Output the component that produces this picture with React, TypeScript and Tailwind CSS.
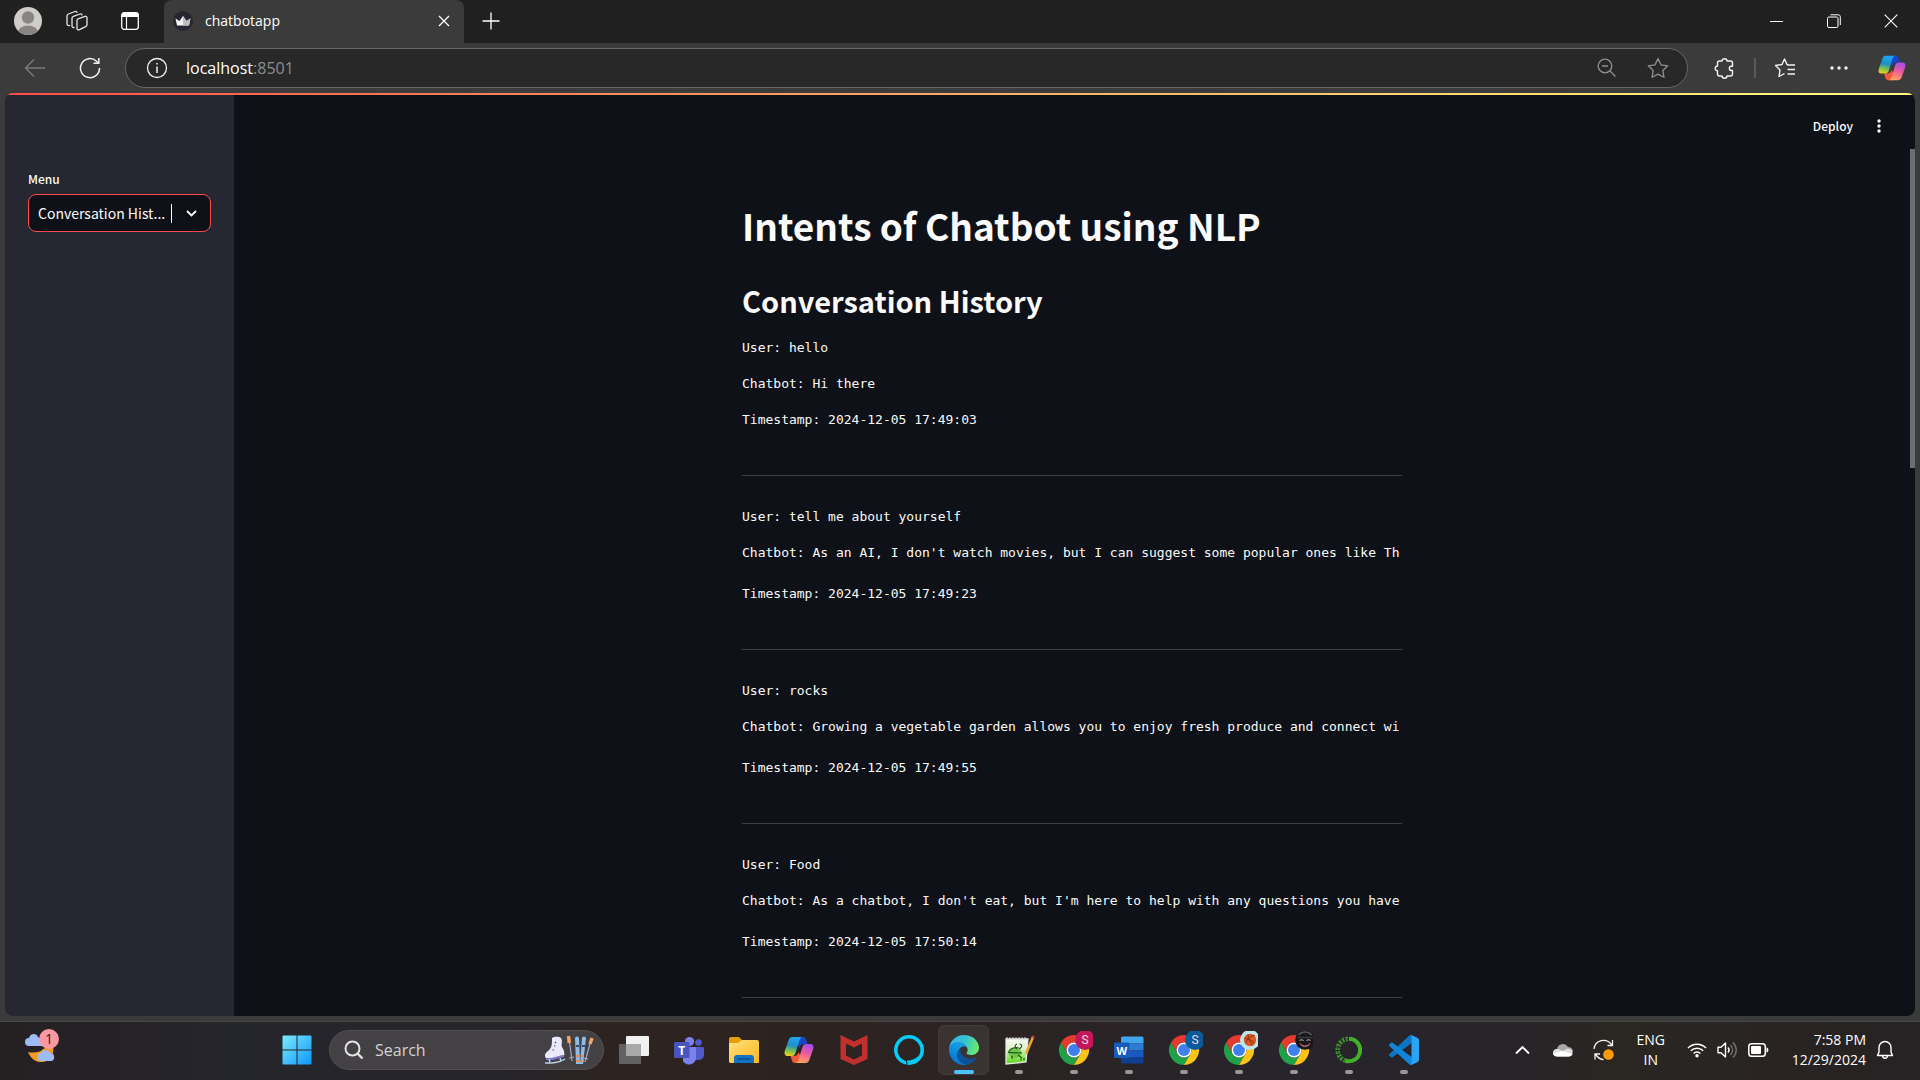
import React from 'react';

const SANS = "font-['Noto_Sans_CJK_SC',sans-serif]";

function Chrome({ children }: { children?: React.ReactNode }) {
  return (
    <svg width="38" height="38" viewBox="-4 -4 38 38" fill="none">
      <g transform="scale(0.625)">
        <path fill="#e33b2e" d="M24 12H44.8A24 24 0 0 0 3.2 12L13.6 30A12 12 0 0 1 24 12z" />
        <path fill="#21a04a" d="M34.4 30L24 48A24 24 0 0 1 3.2 12L13.6 30A12 12 0 0 0 34.4 30z" />
        <path fill="#fcc417" d="M24 12H44.8A24 24 0 0 1 24 48L34.4 30A12 12 0 0 0 24 12z" />
        <circle cx="24" cy="24" r="12" fill="#fff" />
        <circle cx="24" cy="24" r="9.6" fill="#3f7fee" />
      </g>
      {children}
    </svg>
  );
}

function Badge({ color }: { color: string }) {
  return (
    <g>
      <circle cx="26" cy="5" r="10" fill={color} />
      <text x="26" y="9" fill="#f3d6e4" fontSize="12" textAnchor="middle" fontFamily="Roboto, sans-serif">S</text>
    </g>
  );
}

function Copilot({ size, id }: { size: number; id: string }) {
  return (
    <svg width={size} height={size} viewBox="0 0 30 30" fill="none">
      <defs>
        <linearGradient id={id + 'a'} x1="9" y1="2" x2="5" y2="21" gradientUnits="userSpaceOnUse">
          <stop stopColor="#1fa5f0" />
          <stop offset=".45" stopColor="#1f8fc8" />
          <stop offset=".72" stopColor="#7cc04c" />
          <stop offset="1" stopColor="#f5cf1d" />
        </linearGradient>
        <linearGradient id={id + 'b'} x1="25" y1="9" x2="18" y2="28" gradientUnits="userSpaceOnUse">
          <stop stopColor="#a44cf0" />
          <stop offset=".5" stopColor="#ee5a9c" />
          <stop offset="1" stopColor="#fca45c" />
        </linearGradient>
      </defs>
      <path d="M14 2H19C21.500 2 22 4 22.800 7L23.500 9H20C17 9 16 11 15.500 13L13 8z" fill="#1745c8" />
      <path d="M16 28H11C8.500 28 8 26 7.200 23L6.500 21H10C13 21 14 19 14.500 17L17 22z" fill="#f4583c" />
      <path d="M8.500 2H18.500C16.800 2 16 4 15.300 6L11.500 18C11 20 9.500 21 8 21H4C1 21 0 19 .8 16L4.500 5.500C5.200 3 6.500 2 8.500 2z" fill={`url(#${id}a)`} />
      <path d="M21.500 28H11.500C13.200 28 14 26 14.700 24L18.500 12C19 10 20.500 9 22 9H26C29 9 30 11 29.200 14L25.500 24.500C24.800 27 23.500 28 21.500 28z" fill={`url(#${id}b)`} />
    </svg>
  );
}

function EdgeLogo() {
  return (
    <svg width="30" height="30" viewBox="0 0 256 256">
      <defs>
        <linearGradient id="eg1" x1="63" y1="178" x2="242" y2="178" gradientUnits="userSpaceOnUse">
          <stop stopColor="#0c59a4" /><stop offset="1" stopColor="#114a8b" />
        </linearGradient>
        <linearGradient id="eg2" x1="150" y1="90" x2="40" y2="235" gradientUnits="userSpaceOnUse">
          <stop stopColor="#1b9de2" /><stop offset=".4" stopColor="#1595df" /><stop offset="1" stopColor="#0078d4" />
        </linearGradient>
        <linearGradient id="eg3" x1="20" y1="50" x2="240" y2="130" gradientUnits="userSpaceOnUse">
          <stop stopColor="#35b4ee" /><stop offset=".5" stopColor="#36c3d0" /><stop offset="1" stopColor="#66eb6e" />
        </linearGradient>
      </defs>
      <g transform="translate(-4.6 -4.9)">
        <path fill="url(#eg1)" d="M235.680 195.460a93.730 93.730 0 01-10.540 4.710 101.870 101.870 0 01-35.900 6.460c-47.320 0-88.540-32.550-88.540-74.320A31.480 31.480 0 01117.130 105c-42.800 1.800-53.800 46.400-53.800 72.530 0 73.880 68.090 81.370 82.760 81.370 7.910 0 19.840-2.300 27-4.560l1.310-.44a128.340 128.340 0 0066.600-52.800 4 4 0 00-5.320-5.640z" />
        <path fill="url(#eg2)" d="M110.340 246.340A79.200 79.200 0 0187.600 225a80.720 80.720 0 0129.530-120c3.120-1.470 8.450-4.130 15.540-4a32.350 32.350 0 0125.690 13 31.880 31.880 0 016.360 18.660c0-.21 24.460-79.600-80-79.600-43.900 0-80 41.660-80 78.210a130.150 130.150 0 0012.110 56 128 128 0 00156.380 67.110 75.550 75.550 0 01-62.780-8z" />
        <path fill="url(#eg3)" d="M156.940 153.780c-.81 1.050-3.300 2.500-3.300 5.660 0 2.610 1.700 5.120 4.720 7.230 14.380 10 41.490 8.680 41.560 8.680a59.560 59.560 0 0030.270-8.350 61.380 61.380 0 0030.430-52.880c.26-22.410-8-37.310-11.340-43.910C228.090 28.760 182.350 5 132.620 5a128 128 0 00-128 126.200c.48-36.540 36.800-66.050 80-66.050 3.500 0 23.460.34 42 10.070 16.340 8.580 24.900 18.940 30.850 29.210 6.180 10.670 7.280 24.150 7.280 29.520s-2.740 13.330-7.810 19.830z" />
      </g>
    </svg>
  );
}

const TaskView = () => (
  <svg width="30" height="30" viewBox="0 0 30 30">
    <rect x="0" y="9" width="22" height="20" rx="1" fill="#626262" />
    <rect x="7" y="1" width="23" height="20" rx="1" fill="#f1f1f1" />
    <path d="M7 9h15v12H7z" fill="#a9a9a9" />
  </svg>
);

const Teams = () => (
  <svg width="30" height="30" viewBox="0 0 30 30">
    <circle cx="24.500" cy="7.500" r="3.300" fill="#5059c9" />
    <path d="M20 12h8.500c.8 0 1.500.7 1.500 1.500V20a5 5 0 0 1-5 5h-5z" fill="#5059c9" />
    <circle cx="15.500" cy="6.500" r="4.600" fill="#7b83eb" />
    <path d="M9 12h13v10.500a7 7 0 0 1-13 3.500z" fill="#7b83eb" />
    <rect x="0" y="7" width="15.500" height="16" rx="1.500" fill="#4b53bc" />
    <text x="7.700" y="19.500" textAnchor="middle" fill="#fff" fontSize="12" fontWeight="700" fontFamily="Open Sans, sans-serif">T</text>
  </svg>
);

const Folder = () => (
  <svg width="30" height="30" viewBox="0 0 30 30">
    <defs>
      <linearGradient id="fo" x1="0" y1="0" x2="1" y2="1"><stop stopColor="#ffe17e" /><stop offset="1" stopColor="#fcb61b" /></linearGradient>
    </defs>
    <path d="M0 4a2 2 0 0 1 2-2h8l4 4v5H0z" fill="#e3a008" />
    <path d="M0 8h9l4-3h15a2 2 0 0 1 2 2v21H2a2 2 0 0 1-2-1z" fill="url(#fo)" />
    <path d="M5 28v-5a3 3 0 0 1 3-3h14a3 3 0 0 1 3 3v5z" fill="#1272c4" />
    <path d="M8.500 24h13" stroke="#0a4b8c" strokeWidth="1.300" />
  </svg>
);

const McAfee = () => (
  <svg width="30" height="30" viewBox="0 0 30 30">
    <path fill="#c0302c" fillRule="evenodd" d="M1.500 0L15 6.500 28.500 0V24L15 30 1.500 24zM7 8.500V20.500L15 24.500 23 20.500V8.500L15 12.500z" />
  </svg>
);

const Alexa = () => (
  <svg width="30" height="30" viewBox="0 0 30 30" fill="none">
    <circle cx="15" cy="15" r="13.200" stroke="#05cbf9" strokeWidth="3.600" />
    <path d="M12.500 25.500C18 25.500 22 24 25 20L21 28 13 30z" fill="#05cbf9" />
    <path d="M12.300 25l1 5.500" stroke="#2b2321" strokeWidth="1" />
  </svg>
);

const NotepadPP = () => (
  <svg width="32" height="32" viewBox="0 0 32 32" fill="none">
    <defs><linearGradient id="np" x1="0" y1="0" x2="0" y2="1"><stop stopColor="#f7f9f4" /><stop offset=".4" stopColor="#e0f0c8" /><stop offset="1" stopColor="#55d80c" /></linearGradient></defs>
    <path d="M3 5H25L23 28 3 30z" fill="url(#np)" stroke="#e8e8e8" strokeWidth="1.300" />
    <path d="M4 3v3m3-3v3m3-3v3m3-3v3m3-3v3m3-3v3m3-3v3" stroke="#d9d9d9" />
    <ellipse cx="12" cy="19" rx="6.500" ry="5" fill="#6fc74a" />
    <path d="M5.500 19c1-5 8-7 12-4M14 10c-2.500 1-2.500 4 0 5m2.500-5c2.500 0 3 3 .5 4M5 18.500l14 .5M10 22c-2 .5-2 2 0 2.500m5-3.500l4 3m2 0v2m-3-1.500v2" stroke="#1c5115" strokeWidth="1.100" />
    <path d="M30 3L23 20" stroke="#e9a62b" strokeWidth="2.600" />
    <path d="M30.500 2l-.8 2" stroke="#c24b3a" strokeWidth="2.600" />
    <path d="M23.400 19.500l-1.200 3.500" stroke="#ead9b0" strokeWidth="1.300" />
  </svg>
);

const Word = () => (
  <svg width="30" height="30" viewBox="0 0 30 30">
    <path d="M7 3a1.500 1.500 0 0 1 1.500-1.500H28A1.500 1.500 0 0 1 29.500 3v5.500H7z" fill="#41a5ee" />
    <path d="M7 8.500h22.500v7H7z" fill="#2b7cd3" />
    <path d="M7 15.500h22.500V22H7z" fill="#185abd" />
    <path d="M7 22h22.500v5a1.500 1.500 0 0 1-1.500 1.500H8.500A1.500 1.500 0 0 1 7 27z" fill="#103f91" />
    <rect x="0" y="7.500" width="15.500" height="15.500" rx="1.500" fill="#185abd" />
    <text x="7.700" y="19.500" textAnchor="middle" fill="#fff" fontSize="11" fontWeight="700" fontFamily="Open Sans, sans-serif">W</text>
  </svg>
);

const Anaconda = () => (
  <svg width="30" height="30" viewBox="0 0 30 30" fill="none">
    <path d="M15 3.800A11.200 11.200 0 1 1 11 25.500" stroke="#43b02a" strokeWidth="4" />
    <path d="M14 3.800A11.200 11.200 0 0 0 11 25.500" stroke="#3d9c28" strokeWidth="4.400" strokeDasharray="2.400 1.200" />
    <path d="M14 3.800A11.200 11.200 0 0 0 11 25.500" stroke="#27242a" strokeWidth="1.200" strokeDasharray="1.400 1.600" />
  </svg>
);

const VSCode = () => (
  <svg width="30" height="30" viewBox="0 0 100 100">
    <path fill="#0b76c4" d="M96 10L75 1C72.600 0 70 .3 68 2L1.300 63c-1.800 1.600-1.800 4.500 0 6l5.500 5c1.500 1.400 3.800 1.500 5.400.2L93 13.400c2.700-2 6.600-.1 6.600 3.300z" />
    <path fill="#1186d8" d="M96 90L75 99c-2.400 1-5 .7-7-1L1.300 37c-1.800-1.600-1.800-4.500 0-6l5.500-5c1.500-1.400 3.800-1.500 5.400-.2L93 86.600c2.700 2 6.600.1 6.600-3.300z" />
    <path fill="#2ba4f4" d="M75.800 99c-2.400 1-5 .5-6.800-1.300 2.200 2.200 6 .6 6-2.500V5c0-3.100-3.800-4.700-6-2.500C70.800.5 73.500 0 75.800 1L96.400 11c2.200 1 3.600 3.200 3.600 5.600v66.800c0 2.400-1.400 4.600-3.600 5.600z" />
  </svg>
);

const Basketball = () => (
  <g>
    <circle cx="26" cy="5" r="10" fill="#bfe6ea" />
    <circle cx="26" cy="5" r="6.200" fill="#dd5a24" />
    <path d="M20.500 3.500c4 0 8 2 10 5M24-.5c0 4 2 8 5 11m2-10c-4 0-8 3-9 8" stroke="#7c2b12" strokeWidth=".9" />
  </g>
);

const Masked = () => (
  <g>
    <circle cx="26" cy="5" r="9.800" fill="#17171a" />
    <path d="M19.500 0c3-4 10-4 13 0" stroke="#55555a" strokeWidth="1.500" />
    <path d="M18.500 2.500h15" stroke="#3a3a3e" strokeWidth="1.500" />
    <path d="M20.500 5.500c1.500-1 3-.8 4 .3m3 0c1-1.100 2.500-1.300 4-.3" stroke="#a8a8a8" strokeWidth="1.100" />
    <path d="M21 8c2 3.500 8 3.500 10 0-.5 5-9.500 5-10 0z" fill="#d0c8c8" stroke="#9c4444" strokeWidth=".7" />
  </g>
);

type App = { name: string; icon: React.ReactNode; state?: 'open' | 'active' };
const APPS: App[] = [
  { name: 'Task View', icon: <TaskView /> },
  { name: 'Teams', icon: <Teams /> },
  { name: 'File Explorer', icon: <Folder /> },
  { name: 'Copilot', icon: <Copilot size={30} id="ct" /> },
  { name: 'McAfee', icon: <McAfee /> },
  { name: 'Alexa', icon: <Alexa /> },
  { name: 'Edge', icon: <EdgeLogo />, state: 'active' },
  { name: 'Notepad++', icon: <NotepadPP />, state: 'open' },
  { name: 'Chrome profile 1', icon: <Chrome><Badge color="#c2185b" /></Chrome>, state: 'open' },
  { name: 'Word', icon: <Word />, state: 'open' },
  { name: 'Chrome profile 2', icon: <Chrome><Badge color="#0b5a9c" /></Chrome>, state: 'open' },
  { name: 'Chrome profile 3', icon: <Chrome><Basketball /></Chrome>, state: 'open' },
  { name: 'Chrome profile 4', icon: <Chrome><Masked /></Chrome>, state: 'open' },
  { name: 'Anaconda', icon: <Anaconda />, state: 'open' },
  { name: 'VS Code', icon: <VSCode />, state: 'open' },
];

function TitleBar() {
  return (
    <header className="flex h-[43px] shrink-0 items-stretch bg-[#202020] pb-px text-white">
      <div className="flex w-[164px] items-center pl-3.5">
        <button aria-label="Profile" className="mr-6">
          <svg width="28" height="28" viewBox="0 0 28 28">
            <defs><clipPath id="av"><circle cx="14" cy="14" r="14" /></clipPath></defs>
            <g clipPath="url(#av)">
              <rect width="28" height="28" fill="#cfcdca" />
              <circle cx="14" cy="10.500" r="6.200" fill="#8a8583" />
              <ellipse cx="14" cy="26" rx="10.500" ry="7.500" fill="#8a8583" />
            </g>
          </svg>
        </button>
        <button aria-label="Workspaces" className="mr-[33px]">
          <svg width="22" height="22" viewBox="0 0 22 22" fill="none" stroke="#e6e6e6" strokeWidth="1.300" strokeLinejoin="round" strokeLinecap="round">
            <path d="M12 8.800l7-2.500c1-.3 2 .3 2 1.400v7c0 1-.5 1.600-1.400 2L13 19.800c-1 .4-2-.3-2-1.400V10.500c0-1 .3-1.500 1-1.700z" />
            <path d="M8 17.500c-1.200.3-2-.4-2-1.400V8.300c0-1 .5-1.600 1.400-2L14 4c1-.3 1.800.1 2 .9" />
            <path d="M3.500 15.500C2 15.700 1 15 1 14V6c0-1 .5-1.600 1.400-2L9 1.500c1-.3 1.800.1 2 .9" />
          </svg>
        </button>
        <button aria-label="Tab actions">
          <svg width="18" height="18" viewBox="0 0 18 18" fill="none">
            <rect x=".7" y=".7" width="16.600" height="16.600" rx="2.500" stroke="#fff" strokeWidth="1.300" />
            <path d="M.7 3A2.300 2.300 0 0 1 3 .7h12A2.300 2.300 0 0 1 17.300 3v2H.7z" fill="#fff" />
            <path d="M5.500 5v12" stroke="#fff" strokeWidth="1.200" />
          </svg>
        </button>
      </div>
      <div className="-mb-px flex w-[300px] items-center rounded-t-lg bg-[#3b3b3b] pb-px pl-2 pr-2.5">
        <svg width="22" height="22" viewBox="0 0 22 22" className="mr-[11px]">
          <circle cx="11" cy="11" r="10" fill="#262730" />
          <path d="M3.500 8.500L7.500 11 11 6l3.500 5 4-2.500L17 15.500H5z" fill="#f4f4f4" />
          <path d="M11 6l3.500 5 4-2.500L17 15.500H11z" fill="#bdbdc0" />
        </svg>
        <span className="flex-1 text-sm font-['Open_Sans',sans-serif]">chatbotapp</span>
        <button aria-label="Close tab" className="p-1">
          <svg width="12" height="12" viewBox="0 0 12 12" stroke="#fff" strokeWidth="1.300"><path d="M1 1l10 10M11 1L1 11" /></svg>
        </button>
      </div>
      <button aria-label="New tab" className="px-[17px]">
        <svg width="20" height="20" viewBox="0 0 20 20" stroke="#fff" strokeWidth="1.300"><path d="M10 1.500v17M1.500 10h17" /></svg>
      </button>
      <div className="ml-auto flex">
        <button aria-label="Minimize" className="flex w-[57px] items-center justify-center">
          <svg width="13" height="13" viewBox="0 0 13 13" stroke="#fff"><path d="M0 6.500h13" /></svg>
        </button>
        <button aria-label="Restore" className="flex w-[57px] items-center justify-center">
          <svg width="14" height="14" viewBox="0 0 14 14" fill="none" stroke="#fff"><rect x=".5" y="3" width="10.500" height="10.500" rx="1.500" /><path d="M3.500 .8H11.500A2 2 0 0 1 13.300 2.500V11" /></svg>
        </button>
        <button aria-label="Close" className="flex w-[58px] items-center justify-center">
          <svg width="14" height="14" viewBox="0 0 14 14" stroke="#fff" strokeWidth="1.100"><path d="M.7 .7l12.600 12.600M13.300 .7L.7 13.300" /></svg>
        </button>
      </div>
    </header>
  );
}

const STAR = 'M10 1.500l2.700 5.600 6.100.9-4.400 4.300 1 6.100L10 15.500l-5.400 2.900 1-6.100L1.200 8l6.100-.9z';

function AddressBar() {
  return (
    <div className="flex h-[50px] shrink-0 items-center bg-[#3b3b3b]">
      <button aria-label="Back" className="ml-6 mr-[33px]">
        <svg width="22" height="20" viewBox="0 0 22 20" fill="none" stroke="#7c7c7c" strokeWidth="1.300"><path d="M21 10H1.500M10 1.500L1.500 10l8.500 8.500" /></svg>
      </button>
      <button aria-label="Refresh" className="mr-6">
        <svg width="22" height="22" viewBox="0 0 22 22" fill="none" stroke="#f2f2f2" strokeWidth="1.500"><path d="M20.500 11A9.500 9.500 0 1 1 17.500 4.200L19.500 6M19.800 1v5.300h-5.300" /></svg>
      </button>
      <div className="flex h-10 flex-1 items-center rounded-full border border-[#666] bg-[#282828] pl-5 pr-[18px]">
        <button aria-label="Site information" className="mr-[18px]">
          <svg width="22" height="22" viewBox="0 0 22 22" fill="none" stroke="#f2f2f2" strokeWidth="1.300"><circle cx="11" cy="11" r="9.500" /><path d="M11 9.500V16M11 6v1.600" strokeWidth="1.500" /></svg>
        </button>
        <span className="flex-1 text-[16px] text-white font-['Open_Sans',sans-serif]">localhost<span className="text-[#8c8c8c]">:8501</span></span>
        <button aria-label="Zoom" className="mr-[30px]">
          <svg width="20" height="20" viewBox="0 0 20 20" fill="none" stroke="#8f8f8f" strokeWidth="1.300"><circle cx="8" cy="8" r="6.800" /><path d="M13 13l5.500 5.500M5 8h6" /></svg>
        </button>
        <button aria-label="Add favorite">
          <svg width="22" height="22" viewBox="0 0 20 20" fill="none" stroke="#8f8f8f" strokeWidth="1.200" strokeLinejoin="round"><path d={STAR} /></svg>
        </button>
      </div>
      <button aria-label="Extensions" className="ml-[26px]">
        <svg width="22" height="22" viewBox="0 0 22 22" fill="none" stroke="#f2f2f2" strokeWidth="1.400" strokeLinejoin="round"><path d="M5.500 4H8C8 .9 13 .9 13 4h3.500A2 2 0 0 1 18.500 6v3.200H17.300c-2.600 0-2.600 4.300 0 4.300h1.200V17a2 2 0 0 1-2 2H13c0 2.900-5 2.900-5 0H5.500a2 2 0 0 1-2-2v-3.200c-3 0-3-4.800 0-4.800V6a2 2 0 0 1 2-2z" /></svg>
      </button>
      <span className="ml-[18px] h-5 w-0.5 bg-[#5a5a5a]" />
      <button aria-label="Favorites" className="ml-[18px]">
        <svg width="22" height="22" viewBox="0 0 22 22" fill="none" stroke="#f2f2f2" strokeWidth="1.400" strokeLinejoin="round"><path d="M14.500 8L13 7.500 10.500 2 8 7.500 1.500 8.500 6 13l-1 6.500 5.500-3M13.500 8H21M13.500 12.500H21M13.500 17H21" /></svg>
      </button>
      <button aria-label="Settings" className="ml-[34px]">
        <svg width="18" height="6" viewBox="0 0 18 6" fill="#f2f2f2"><circle cx="2" cy="3" r="1.700" /><circle cx="9" cy="3" r="1.700" /><circle cx="16" cy="3" r="1.700" /></svg>
      </button>
      <button aria-label="Copilot" className="ml-[30px] mr-3.5"><Copilot size={28} id="cb" /></button>
    </div>
  );
}

const HISTORY = [
  { user: 'hello', bot: 'Hi there', time: '2024-12-05 17:49:03', wide: false },
  { user: 'tell me about yourself', bot: "As an AI, I don't watch movies, but I can suggest some popular ones like Th", time: '2024-12-05 17:49:23', wide: true },
  { user: 'rocks', bot: 'Growing a vegetable garden allows you to enjoy fresh produce and connect wi', time: '2024-12-05 17:49:55', wide: true },
  { user: 'Food', bot: "As a chatbot, I don't eat, but I'm here to help with any questions you have", time: '2024-12-05 17:50:14', wide: true },
];

const LINE = "overflow-hidden whitespace-pre text-[13px] leading-5 font-['DejaVu_Sans_Mono',monospace]";

function Sidebar() {
  return (
    <aside className={`w-[229px] shrink-0 bg-[#262730] px-[23px] pt-[74px] ${SANS}`}>
      <label htmlFor="menu" className="block text-xs font-medium leading-5">Menu</label>
      <div className="relative mt-[5px]">
        <select id="menu" className="h-[38px] w-full appearance-none rounded-lg border border-[#ff4b4b] bg-[#0e1117] pl-[9px] pt-px text-[14px] outline-none">
          <option>Conversation Hist...</option>
        </select>
        <span className="pointer-events-none absolute right-[39px] top-2.5 h-[19px] w-px bg-white" />
        <svg className="pointer-events-none absolute right-3.5 top-3.5" width="11" height="11" viewBox="0 0 11 11" fill="none" stroke="#fafafa" strokeWidth="1.800"><path d="M1 3l4.500 4.500L10 3" /></svg>
      </div>
    </aside>
  );
}

function Page() {
  return (
    <div className="mx-[5px] mb-[5px] flex min-h-0 flex-1 flex-col overflow-hidden rounded-lg text-[#fafafa]">
      <div className="h-0.5 shrink-0 bg-gradient-to-r from-[#ff4b4b] to-[#fffd80]" />
      <div className="flex min-h-0 flex-1">
        <Sidebar />
        <div className="flex min-w-0 flex-1 flex-col bg-[#0e1117]">
          <div className="flex h-[54px] shrink-0 items-center justify-end gap-[23px] pr-[33px] pt-2">
            <button className={`text-xs font-medium ${SANS}`}>Deploy</button>
            <button aria-label="Main menu">
              <svg width="6" height="14" viewBox="0 0 6 14" fill="#fafafa"><circle cx="3" cy="2" r="1.700" /><circle cx="3" cy="7" r="1.700" /><circle cx="3" cy="12" r="1.700" /></svg>
            </button>
          </div>
          <div className="flex min-h-0 flex-1">
            <main className="min-w-0 flex-1 overflow-hidden">
              <div className="mx-auto max-w-[660px] pt-[52px]">
                <h1 className={`text-[37px] font-bold leading-[48px] ${SANS}`}>Intents of Chatbot using NLP</h1>
                <h2 className={`mt-[33px] text-[29px] font-semibold leading-9 ${SANS}`}>Conversation History</h2>
                <div className="pt-5">
                  {HISTORY.map((h) => (
                    <section key={h.time}>
                      <p className={LINE}>User: {h.user}</p>
                      <p className={`mt-4 ${LINE}`}>Chatbot: {h.bot}</p>
                      <p className={`${h.wide ? 'mt-[21px]' : 'mt-4'} ${LINE}`}>Timestamp: {h.time}</p>
                      <hr className="mb-[31px] mt-[45px] border-[#3d4044]" />
                    </section>
                  ))}
                </div>
              </div>
            </main>
            <div className="w-[5px] shrink-0"><div className="h-[319px] bg-[#6c6e73]" /></div>
          </div>
        </div>
      </div>
    </div>
  );
}

function Taskbar() {
  return (
    <footer className="flex h-[59px] shrink-0 items-stretch border-t border-[#4a4845] bg-[linear-gradient(to_right,#252022,#25252c_12%,#26252b_26%,#2d2320_32%,#2b2322_52%,#27242b_66%,#27242a_78%,#2a2622_84%,#272223)] pb-0.5 text-white font-['Open_Sans',sans-serif]">
      <div className="flex w-[271px] pl-6 pt-1.5">
        <button aria-label="Weather" className="self-start">
          <svg width="36" height="38" viewBox="0 0 36 38">
            <path d="M4 24c5 1 12 1 15-3l10-4c2 10-4 18-13 17-6-.5-10-5-12-10z" fill="#f59b25" />
            <path d="M5 18a4 4 0 0 1 0-8c1-5 8-5 9-1l5 3v6z" fill="#9dbcf3" />
            <path d="M17 33a4 4 0 0 1 0-8c1-4 8-4 9 0 5-1 6 8 1 8z" fill="#9dbcf3" />
            <circle cx="25" cy="11" r="10" fill="#fd97a2" />
            <text x="25" y="16" fontSize="14" textAnchor="middle" fill="#2b1d1f">1</text>
          </svg>
        </button>
      </div>
      <button aria-label="Start" className="flex w-[58px] items-center justify-center pr-1.5">
        <svg width="30" height="30" viewBox="0 0 30 30">
          <defs><linearGradient id="win" x1="0" y1="0" x2="30" y2="30" gradientUnits="userSpaceOnUse"><stop stopColor="#7fecfd" /><stop offset="1" stopColor="#0a95f8" /></linearGradient></defs>
          <path fill="url(#win)" d="M.5 1.500a1 1 0 0 1 1-1h13v14H.5zM15.500.5h13a1 1 0 0 1 1 1v13h-14zM.5 15.500h14v14h-13a1 1 0 0 1-1-1zM15.500 15.500h14v13a1 1 0 0 1-1 1h-13z" />
        </svg>
      </button>
      <label className="flex h-10 w-[275px] items-center self-center rounded-full border border-[#555152] bg-[#434144] pl-3.5 pr-2">
        <svg width="20" height="20" viewBox="0 0 20 20" fill="none" stroke="#e4e4e4" strokeWidth="2"><circle cx="8.500" cy="8.500" r="7" /><path d="M13.500 13.500L18.500 18.500" strokeWidth="2.400" /></svg>
        <input type="text" aria-label="Search" placeholder="Search" className="ml-[11px] w-0 flex-1 bg-transparent text-base outline-none placeholder:text-[#d2d2d2]" />
        <svg width="54" height="30" viewBox="0 0 54 30" fill="none">
          <path d="M11 3c2-1.500 7-2 9 0 2 3 0 6 1 9 2 3 3 6 2 9-5-1-8 3-18 2-2-2-1-5 2-7 4-3 4-7 4-13z" fill="#eae8fb" />
          <path d="M5 23c8 1 13-3 18-3v2c-5 0-9 4-18 3z" fill="#7f78cf" />
          <path d="M8 24l1 3m10-4l1 3M4 28c7 0 14 0 20-4" stroke="#b9d3ea" strokeWidth="1.500" />
          <path d="M14 7l1 1m-2 3h1.500m-3 4h1.500" stroke="#4a4679" strokeWidth="1.200" />
          <path d="M28 3l3 23M50 5l-6 22M28 23l5-1M42 23l5 1" stroke="#a9a7c9" strokeWidth="1.200" />
          <path d="M27.500 1l.8 7M51 3l-2 6" stroke="#f3a468" strokeWidth="3.400" />
          <path d="M34 3c1-2 3-2 4 0l1 26h-4zM41 3c1-2 3-2 4 0l-3 26h-3z" fill="#8dbce4" />
          <path d="M35 21h4m1 0h3M35 26h4m1 0h3" stroke="#ef8a54" strokeWidth="2" />
          <path d="M35 11h3m3 0h3" stroke="#324e7a" strokeWidth="2" />
        </svg>
      </label>
      <nav className="ml-0.5 flex items-center">
        {APPS.map((a) => (
          <button
            key={a.name}
            aria-label={a.name}
            className={`mx-[2px] flex h-[50px] w-[51px] flex-col items-center justify-center rounded-md border ${a.state === 'active' ? 'border-[#423b3a] bg-[#3a3332]' : 'border-transparent'}`}
          >
            <span className="relative flex h-[50px] w-full items-center justify-center">
              {a.icon}
              {a.state === 'active' && <span className="absolute bottom-0 h-1 w-5 rounded-full bg-[#4cc2ff]" />}
              {a.state === 'open' && <span className="absolute bottom-0 h-1 w-2 rounded-full bg-[#9a9897]" />}
            </span>
          </button>
        ))}
      </nav>
      <div className="ml-auto flex items-center pr-[26px]">
        <button aria-label="Hidden icons" className="mr-[23px]"><svg width="15" height="10" viewBox="0 0 15 10" fill="none" stroke="#fff" strokeWidth="1.800"><path d="M1 8.500l6.500-6.500L14 8.500" /></svg></button>
        <button aria-label="OneDrive" className="mr-5">
          <svg width="20" height="14" viewBox="0 0 20 14"><path d="M4 6a6 6 0 0 1 11-2c4 0 5 3 5 5H1c0-2 1-3 3-3z" fill="#a7a7a7" /><path d="M4.500 13.500c-6 0-6-7-1-7.500 3-.5 4 1 6 2l5-2.500c6 0 7 8 1 8z" fill="#dedede" /><path d="M4.500 13.500c-3 0-4.500-1.500-4.500-3l9.500-2.500 10 3c-.5 1.500-2 2.500-4 2.500z" fill="#fff" /></svg>
        </button>
        <button aria-label="Update" className="mr-[22px]">
          <svg width="22" height="22" viewBox="0 0 22 22" fill="none" stroke="#f2f2f2" strokeWidth="1.300"><path d="M1 10C2 1 13-2 19 6M19.500 1v5.500h-5M2 20.500V15h5M2.500 15.500c3 4 5 5 8 5" /><circle cx="15.500" cy="15.500" r="5.300" fill="#ff9a0a" stroke="none" /></svg>
        </button>
        <div className="mr-[22px] text-center text-[14px] leading-5">ENG<br />IN</div>
        <button aria-label="Network and sound" className="mr-5 flex items-center gap-2.5">
          <svg width="20" height="16" viewBox="0 0 20 16" fill="none" stroke="#fff" strokeWidth="1.500"><path d="M1 6a12.500 12.500 0 0 1 18 0M3.800 8.800a8.700 8.700 0 0 1 12.400 0M6.600 11.500a4.800 4.800 0 0 1 6.800 0" /><circle cx="10" cy="13.800" r="1.700" fill="#fff" stroke="none" /></svg>
          <svg width="21" height="18" viewBox="0 0 21 18" fill="none" stroke="#fff" strokeWidth="1.400"><path d="M1 6.300h3L8.500 2v14L4 11.700H1z" strokeLinejoin="round" /><path d="M11 6.500c1.300 1.500 1.300 3.500 0 5" /><path d="M13.500 4c2.700 3 2.700 7 0 10M16 1.500c4.300 4.500 4.300 10.500 0 15" stroke="#77716f" /></svg>
          <svg width="21" height="14" viewBox="0 0 21 14" fill="none"><rect x=".8" y=".8" width="16.500" height="12.400" rx="2.800" stroke="#fff" strokeWidth="1.500" /><rect x="3" y="3" width="10" height="8" rx="1" fill="#fff" /><path d="M18.500 4.500c2.500 0 2.500 5 0 5z" fill="#fff" /></svg>
        </button>
        <div className="mr-2.5 w-[77px] text-right text-[14px] leading-5">7:58 PM<br />12/29/2024</div>
        <button aria-label="Notifications">
          <svg width="18" height="20" viewBox="0 0 18 20" fill="none" stroke="#fff" strokeWidth="1.400" strokeLinejoin="round"><path d="M1.500 15.500L3 12V7.500a6 6 0 0 1 12 0V12l1.500 3.500zM6.500 16c.5 3 4.500 3 5 0" /></svg>
        </button>
      </div>
    </footer>
  );
}

export default function App() {
  return (
    <div className="flex h-screen flex-col overflow-hidden bg-[#3b3b3b]">
      <TitleBar />
      <AddressBar />
      <Page />
      <Taskbar />
    </div>
  );
}
